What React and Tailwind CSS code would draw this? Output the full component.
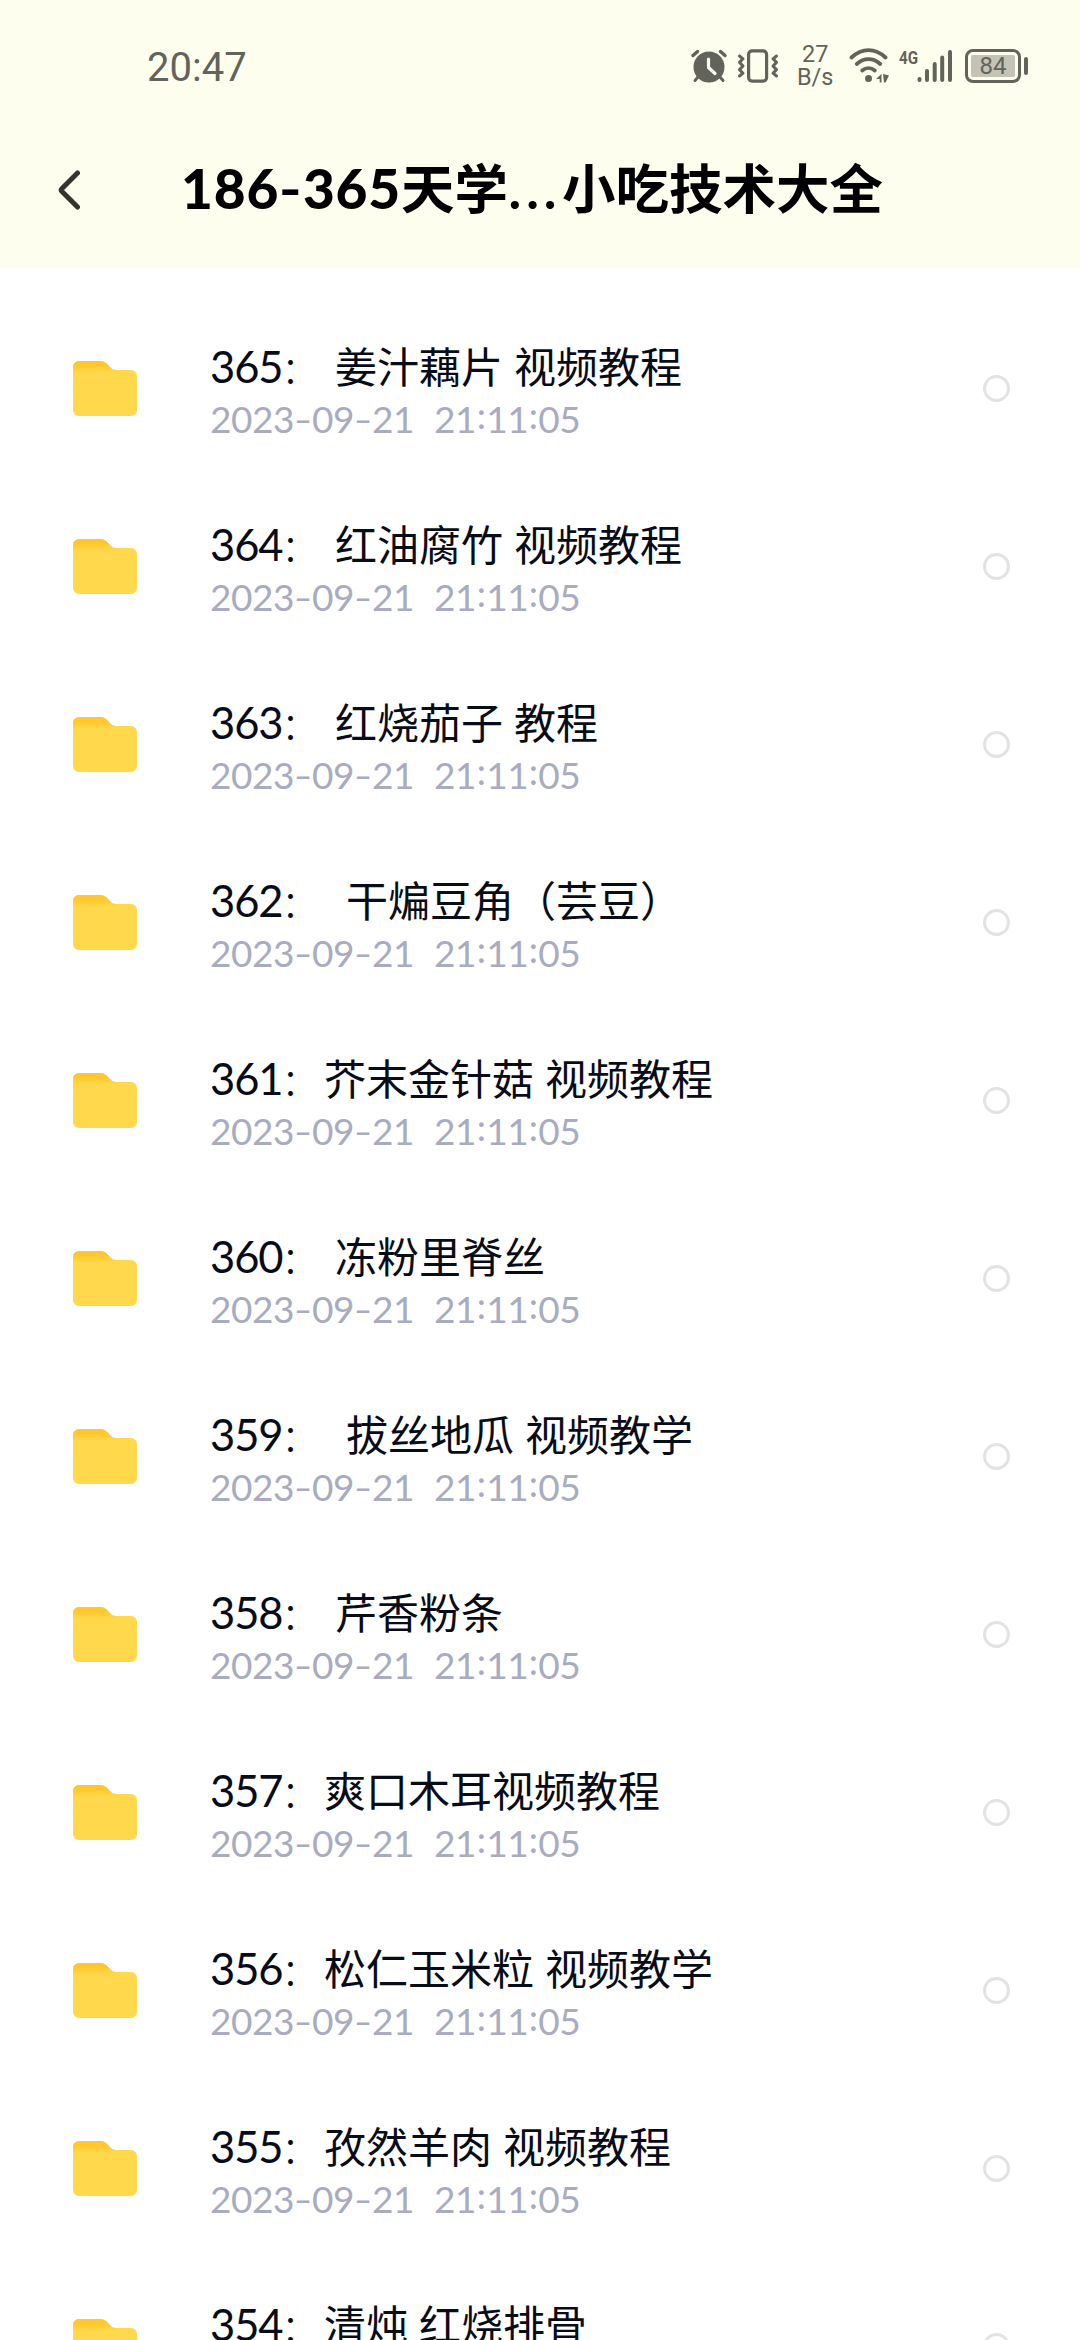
const files = [
  { no: "365", name: " 姜汁藕片 视频教程" },
  { no: "364", name: " 红油腐竹 视频教程" },
  { no: "363", name: " 红烧茄子 教程" },
  { no: "362", name: "  干煸豆角（芸豆）" },
  { no: "361", name: "芥末金针菇 视频教程" },
  { no: "360", name: " 冻粉里脊丝" },
  { no: "359", name: "  拔丝地瓜 视频教学" },
  { no: "358", name: " 芹香粉条" },
  { no: "357", name: "爽口木耳视频教程" },
  { no: "356", name: "松仁玉米粒 视频教学" },
  { no: "355", name: "孜然羊肉 视频教程" },
  { no: "354", name: "清炖 红烧排骨" },
];

function AlarmIcon() {
  return (
    <svg className="h-[36px] w-[38px]" viewBox="0 0 38 36" fill="none" stroke="#62635a" strokeLinecap="round">
      <circle cx="19" cy="19" r="15.5" fill="#62635a" stroke="none" />
      <path d="M3 7.5 7.5 3.5M35 7.5 30.5 3.5" strokeWidth="3.4" />
      <path d="M8 29 5 32.5M30 29 33 32.5" strokeWidth="3" />
      <path d="M18.500 11v8.500l6.500 6" stroke="#fefeee" strokeWidth="3.2" strokeLinejoin="round" />
    </svg>
  );
}

function VibrateIcon() {
  return (
    <svg className="h-[34px] w-[42px]" viewBox="0 0 42 34" fill="none" stroke="#62635a" strokeWidth="3.2" strokeLinejoin="round" strokeLinecap="round">
      <rect x="11.6" y="1.9" width="18" height="30.2" rx="3.5" />
      <path d="M2.500 7l3.500 2.800L2.500 13.400 6 17l-3.500 3.600L6 24.200 2.500 27" strokeWidth="3" />
      <path d="M39.500 7 36 9.800l3.500 3.600L36 17l3.500 3.600-3.500 3.600 3.500 2.800" strokeWidth="3" />
    </svg>
  );
}

function WifiIcon() {
  return (
    <svg className="h-[36px] w-[42px]" viewBox="0 0 42 36" fill="none" stroke="#62635a" strokeWidth="3.8" strokeLinecap="round">
      <path d="M2.500 9.500C13-.3 26-.3 36.500 9.500" />
      <path d="M7.800 16c7-6.500 16.400-6.500 23.400 0" />
      <path d="M13.200 22.500c3.800-3.300 8.800-3.300 12.600 0" />
      <circle cx="19.5" cy="30.5" r="3.5" fill="#62635a" stroke="none" />
      <path d="M32.500 26v8.500h-1.800V31H27zM34 26l6 1.500-3.500 7H35z" fill="#62635a" stroke="none" />
    </svg>
  );
}

function SignalIcon() {
  return (
    <svg className="h-[34px] w-[36px]" viewBox="0 0 36 34" stroke="#62635a" strokeWidth="4" strokeLinecap="round">
      <path d="M2.500 30v1M10 22v9M17.700 15v16M25.200 8.500V31M33 3v28" />
    </svg>
  );
}

function FolderIcon() {
  return (
    <svg className="h-[55px] w-[64px] shrink-0" viewBox="0 0 64 55">
      <defs>
        <linearGradient id="tab" x1="0" y1="0" x2="0" y2="1">
          <stop offset="0.2" stopColor="#ffc72b" />
          <stop offset="0.6" stopColor="#ffd94b" />
        </linearGradient>
      </defs>
      <path d="M6 0h21c4 0 6 1.500 8.500 4.500C38 7.500 40 9 43 9h15a6 6 0 0 1 6 6v34a6 6 0 0 1-6 6H6a6 6 0 0 1-6-6V6a6 6 0 0 1 6-6Z" fill="#ffd94b" />
      <path d="M6 0h21c4 0 6 1.500 8.500 4.500C38 7.500 40 9 43 9V20H0V6a6 6 0 0 1 6-6Z" fill="url(#tab)" />
    </svg>
  );
}

function Hyphen() {
  return <span className="inline-block w-[18px] text-center"><span className="inline-block scale-x-[1.35] scale-y-90">-</span></span>;
}

function Colon() {
  return <span className="inline-block w-[10px] -translate-y-[4px] text-center">:</span>;
}

function FileRow({ file }) {
  return (
    <li className="flex h-[178px] shrink-0 items-center pr-[70px] pl-[73px]">
      <FolderIcon />
      <div className="ml-[73px] flex-1 pt-[7px] whitespace-pre">
        <p className="flex h-[55px] items-baseline text-[42px] leading-[54px] text-[#080c18]">
          <span className="w-[72px] font-[Lato] text-[43.5px] tracking-[-1.1px]">{file.no}</span>
          <span className="-ml-px w-[43px] text-[38px] font-light">：</span>
          <span className="[word-spacing:1.6px]">{file.name}</span>
        </p>
        <p className="flex h-[52px] items-baseline font-[Lato] text-[37px] leading-[52px] tracking-[-0.45px] text-[#a9abbf] [font-kerning:none]">
          <span>2023</span>
          <Hyphen />
          <span>09</span>
          <Hyphen />
          <span>21</span>
          <span className="w-[20px]">{"  "}</span>
          <span>21<Colon />11<Colon />05</span>
        </p>
      </div>
      <span className="size-[27px] rounded-full border-[3px] border-[#e3e3e3]" />
    </li>
  );
}

export default function App() {
  return (
    <div className="flex h-[2340px] w-[1080px] flex-col overflow-hidden bg-white font-['Noto_Sans_CJK_SC',sans-serif]">
      <header className="h-[268px] shrink-0 bg-[#fefeee]">
        <div className="flex h-[132px] items-center pr-[52px] pl-[147px] text-[#62635a]">
          <time className="pt-[4px] font-[Roboto] text-[40px] leading-none">20:47</time>
          <div className="ml-auto flex items-center">
            <AlarmIcon />
            <span className="ml-[9px] flex"><VibrateIcon /></span>
            <div className="ml-[15px] w-[42px] text-center font-[Roboto] text-[23.5px] leading-[23px]">
              <p>27</p>
              <p>B/s</p>
            </div>
            <span className="ml-[13px] flex"><WifiIcon /></span>
            <span className="ml-[8px] -mt-[17px] origin-left scale-x-[0.8] font-[Roboto] text-[19px] leading-none font-bold">4G</span>
            <span className="-ml-[6px] flex"><SignalIcon /></span>
            <div className="ml-[12px] flex h-[34px] w-[56px] rounded-[8px] border-[3px] border-current p-[3px]">
              <span className="flex flex-1 items-center justify-center rounded-[2px] bg-[#c5c2b8] font-[Roboto] text-[24px] leading-none">84</span>
            </div>
            <span className="ml-[3px] h-[18px] w-[4px] rounded-full bg-current" />
          </div>
        </div>
        <div className="flex h-[116px] items-center pl-[57px]">
          <svg className="h-[42px] w-[26px]" viewBox="0 0 26 42" fill="none" stroke="#33332f" strokeWidth="5" strokeLinecap="round" strokeLinejoin="round">
            <path d="M20.500 4 5 19.500q-1.500 1.500 0 3L20.500 38" />
          </svg>
          <h1 className="mb-[6px] ml-[98px] flex items-baseline text-[53.5px] leading-none font-bold text-black">
            <span className="flex w-[220px] items-baseline font-[Lato] text-[55px] font-black tracking-[0.8px] whitespace-nowrap">
              186<span className="w-[26px] origin-left scale-x-110 scale-y-90">-</span>365
            </span>
            <span>天学</span>
            <span className="w-[54px] text-center font-[Lato] tracking-[5px]">...</span>
            <span>小吃技术大全</span>
          </h1>
        </div>
      </header>
      <ul className="flex flex-col pt-[31px]">
        {files.map((file) => (
          <FileRow key={file.no} file={file} />
        ))}
      </ul>
    </div>
  );
}
